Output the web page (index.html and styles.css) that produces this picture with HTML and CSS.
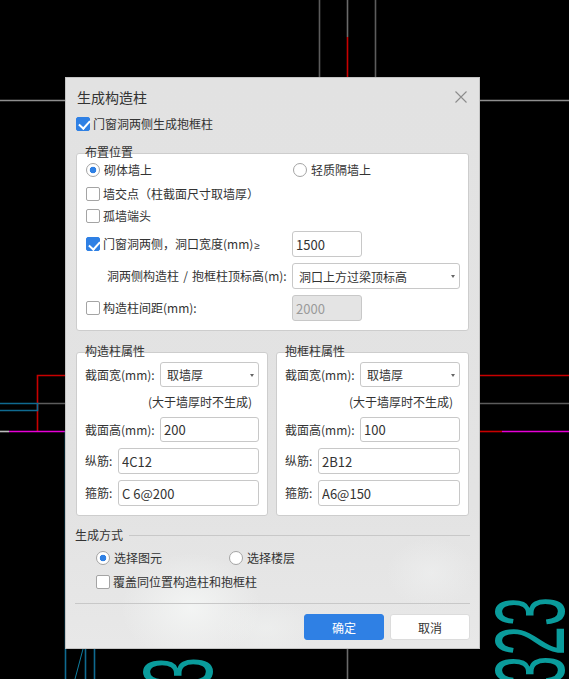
FILE: index.html
```html
<!DOCTYPE html>
<html lang="zh">
<head>
<meta charset="utf-8">
<title>生成构造柱</title>
<link rel="stylesheet" href="styles.css">
</head>
<body>
<svg class="canvas" width="569" height="679" viewBox="0 0 569 679">
  <path class="ln gray-d" d="M319.5 0V80M375.5 0V80"/>
  <path class="ln gray-m" d="M347.5 0V37"/>
  <path class="ln red" d="M347.5 37V80"/>
  <path class="ln gray-l" d="M0 100.5H66M480 100.5H569"/>
  <path class="ln red" d="M37.5 431V375.5H66M480 375.5H569"/>
  <path class="ln gray-d" d="M38 403.5H66M480 403.5H569"/>
  <path class="ln blue" d="M0 403.5H37.5V410.5H0"/>
  <path class="ln pale" d="M0 431.5H9"/>
  <path class="ln magenta" d="M9 431.5H66M502 431.5H569"/>
  <path class="ln red" d="M480 431.5H502"/>
  <path class="ln blue" d="M65.5 431V679M94.5 649V679M85.5 649V679"/>
  <path class="ln gray-m" d="M347.5 649V679"/>
  <path class="ln diag" d="M75 679L83 649"/>
  <text class="cad-num" transform="translate(564 685) rotate(-90) scale(.54 1)">323</text>
  <text class="cad-num" transform="translate(212 716) rotate(-90) scale(.54 1)">33</text>
</svg>

<main class="dialog">
  <header class="dialog-head">
    <h1 class="dialog-title">生成构造柱</h1>
    <svg class="close" width="12" height="12" viewBox="0 0 12 12"><path d="M.5.5l11 11M11.5.5l-11 11" fill="none" stroke="#8c8c8c" stroke-width="1.1"/></svg>
  </header>

  <div class="dialog-body">
    <label class="check top-check"><input type="checkbox" checked><span>门窗洞两侧生成抱框柱</span></label>

    <section class="group place">
      <span class="legend">布置位置</span>
      <div class="row split-radio">
        <label class="radio"><input type="radio" name="a" checked><span>砌体墙上</span></label>
        <label class="radio"><input type="radio" name="a"><span>轻质隔墙上</span></label>
      </div>
      <label class="check row mt4"><input type="checkbox"><span>墙交点（柱截面尺寸取墙厚）</span></label>
      <label class="check row mt2"><input type="checkbox"><span>孤墙端头</span></label>
      <div class="row ctl split mt5">
        <label class="check"><input type="checkbox" checked><span>门窗洞两侧，洞口宽度(mm)<b class="ge">≥</b></span></label>
        <input class="field w70" type="text" value="1500">
      </div>
      <div class="row ctl split mt6">
        <span class="indent">洞两侧构造柱 / 抱框柱顶标高(m):</span>
        <div class="select w168"><select><option>洞口上方过梁顶标高</option></select></div>
      </div>
      <div class="row ctl split mt6">
        <label class="check"><input type="checkbox"><span>构造柱间距(mm):</span></label>
        <input class="field w70" type="text" value="2000" disabled>
      </div>
    </section>

    <div class="pair">
      <section class="group prop">
        <span class="legend">构造柱属性</span>
        <div class="prop-row h25"><span class="lab wide">截面宽(mm):</span><div class="select grow"><select><option>取墙厚</option></select></div></div>
        <p class="note">(大于墙厚时不生成)</p>
        <div class="prop-row h25"><span class="lab wide">截面高(mm):</span><input class="field grow" type="text" value="200"></div>
        <div class="prop-row mt6"><span class="lab narrow">纵筋:</span><input class="field grow" type="text" value="4C12"></div>
        <div class="prop-row mt6"><span class="lab narrow">箍筋:</span><input class="field grow" type="text" value="C 6@200"></div>
      </section>
      <section class="group prop prop-b">
        <span class="legend">抱框柱属性</span>
        <div class="prop-row h25"><span class="lab wide">截面宽(mm):</span><div class="select grow"><select><option>取墙厚</option></select></div></div>
        <p class="note">(大于墙厚时不生成)</p>
        <div class="prop-row h25"><span class="lab wide">截面高(mm):</span><input class="field grow" type="text" value="100"></div>
        <div class="prop-row mt6"><span class="lab narrow">纵筋:</span><input class="field grow" type="text" value="2B12"></div>
        <div class="prop-row mt6"><span class="lab narrow">箍筋:</span><input class="field grow" type="text" value="A6@150"></div>
      </section>
    </div>

    <div class="section-title"><span>生成方式</span><i class="rule"></i></div>
    <div class="mode">
      <label class="radio"><input type="radio" name="b" checked><span>选择图元</span></label>
      <label class="radio"><input type="radio" name="b"><span>选择楼层</span></label>
    </div>
    <label class="check cover"><input type="checkbox"><span>覆盖同位置构造柱和抱框柱</span></label>

    <hr class="divider">
    <footer class="actions">
      <button class="btn primary" type="button">确定</button>
      <button class="btn" type="button">取消</button>
    </footer>
  </div>
</main>
</body>
</html>
```
FILE: styles.css
```css
* { box-sizing: border-box; }
html, body { margin: 0; height: 679px; overflow: hidden; background: #000; }
body { font: 12px/20px "Noto Sans CJK SC", "Noto Sans", sans-serif; color: #333; }

.canvas { position: absolute; left: 0; top: 0; }
.ln { fill: none; stroke-width: 1.6px; }
.gray-d { stroke: #5c5c5c; }
.gray-m { stroke: #6a6a6a; }
.gray-l { stroke: #8f8f8f; }
.red { stroke: #c80000; }
.blue { stroke: #0f6a90; }
.pale { stroke: #bbb; }
.magenta { stroke: #e600d6; }
.diag { stroke: #0f7ea0; stroke-width: 1px; }
.cad-num { font: 98px "Liberation Sans", sans-serif; fill: #0a9c9c; }

.dialog {
  position: relative;
  width: 415px;
  height: 572px;
  margin: 77px 0 0 65px;
  border: 1px solid #c4c4c4;
  background:
    radial-gradient(ellipse 70px 55px at 125px 530px, rgba(246,248,247,.8), rgba(246,248,247,0)),
    radial-gradient(ellipse 50px 30px at 200px 550px, rgba(240,242,241,.6), rgba(240,242,241,0)),
    radial-gradient(ellipse 45px 35px at 365px 495px, rgba(240,241,241,.6), rgba(240,241,241,0)),
    linear-gradient(#e2e2e2, #e3e3e3 75%, #e8e8e8);
}

.dialog-head { display: flex; justify-content: space-between; align-items: center; height: 38px; padding: 0 12px 0 11px; }
.dialog-title { margin: 0; font-size: 14px; font-weight: 400; line-height: 20px; }
.dialog-body { padding: 0 9px; }

.check, .radio { display: flex; align-items: center; }
.check input, .radio input {
  appearance: none;
  flex: none;
  position: relative;
  width: 14px;
  height: 14px;
  margin: 0;
  background: #fff;
  border: 1px solid #a4a4a4;
}
.check span { margin-left: 3px; white-space: nowrap; }
.radio span { margin-left: 4px; }
.check input { border-radius: 2px; }
.check input:checked { background: #2f80e4; border-color: #2f80e4; }
.check input:checked::after {
  content: "";
  position: absolute;
  left: 3.5px;
  top: .5px;
  width: 5px;
  height: 9px;
  border: solid #fff;
  border-width: 0 2px 2px 0;
  transform: rotate(42deg);
}
.radio input { border-radius: 50%; }
.radio input:checked { background: radial-gradient(circle, #2f80e4 0 3px, #fff 3.6px); }

.top-check { height: 15px; margin-left: 1px; }
.ge { font: 400 10px "Liberation Sans", sans-serif; margin-left: 1px; }

.group { position: relative; background: #fff; border: 1px solid #cdcdcd; border-radius: 3px; }
.legend { position: absolute; left: 8px; top: -12px; }

.place { height: 178px; margin: 22px 1px 0; padding: 6px 9px 0; }
.row { height: 20px; }
.ctl { height: 26px; }
.split { display: grid; grid-template-columns: 206px 1fr; align-items: center; }
.split-radio { display: grid; grid-template-columns: 207px 1fr; align-items: center; }
.indent { padding-left: 21px; white-space: nowrap; word-spacing: 1.5px; }
.mt2 { margin-top: 2px; }
.mt4 { margin-top: 4px; }
.mt5 { margin-top: 5px; }
.mt6 { margin-top: 6px; }

.field {
  height: 26px;
  padding: 0 3px;
  border: 1px solid #c8c8c8;
  border-radius: 3px;
  background: #fff;
  color: #333;
  font: 13px "Noto Sans CJK SC", sans-serif;
  outline: none;
}
.field:disabled { background: #e4e4e4; color: #9a9a9a; }
.w70 { width: 70px; }
.w168 { width: 168px; }

.select { position: relative; height: 26px; }
.select::after {
  content: "";
  position: absolute;
  right: 5px;
  top: 12px;
  border: 2.5px solid transparent;
  border-top: 3px solid #666;
  border-bottom: 0;
}
.select select {
  appearance: none;
  display: block;
  width: 100%;
  height: 100%;
  padding: 0 16px 0 6px;
  border: 1px solid #c8c8c8;
  border-radius: 3px;
  background: #fff;
  color: #333;
  font: 12px "Noto Sans CJK SC", sans-serif;
  outline: none;
}

.pair { display: flex; gap: 8px; margin: 21px 1px 0; }
.prop { width: 192px; height: 164px; padding: 9px 8px 0; }
.prop-b { width: 193px; }
.prop-row { display: flex; align-items: center; height: 26px; }
.prop-row.h25 { height: 25px; }
.h25 .field, .h25 .select { height: 25px; }
.lab { flex: none; white-space: nowrap; }
.wide { width: 75px; }
.narrow { width: 33px; }
.grow { flex: 1; min-width: 0; width: 0; }
.note { margin: 0; height: 30px; line-height: 30px; padding-right: 7px; text-align: right; }

.section-title { display: flex; align-items: center; gap: 6px; height: 18px; margin-top: 10px; }
.rule { flex: 1; height: 1px; background: #c8c8c8; }
.mode { display: grid; grid-template-columns: 133px auto; height: 20px; margin-top: 4px; padding-left: 21px; }
.cover { height: 20px; margin: 4px 0 0 21px; }
.divider { height: 1px; margin: 11px 0 0; border: 0; background: #c8c8c8; }

.actions { display: flex; justify-content: flex-end; gap: 6px; margin-top: 10px; }
.btn {
  width: 80px;
  height: 26px;
  padding: 0;
  border: 1px solid #dcdcdc;
  border-radius: 3px;
  background: #fff;
  color: #333;
  font: 12px "Noto Sans CJK SC", sans-serif;
}
.btn.primary { background: #2f80e4; border-color: #2f80e4; color: #fff; }
```
